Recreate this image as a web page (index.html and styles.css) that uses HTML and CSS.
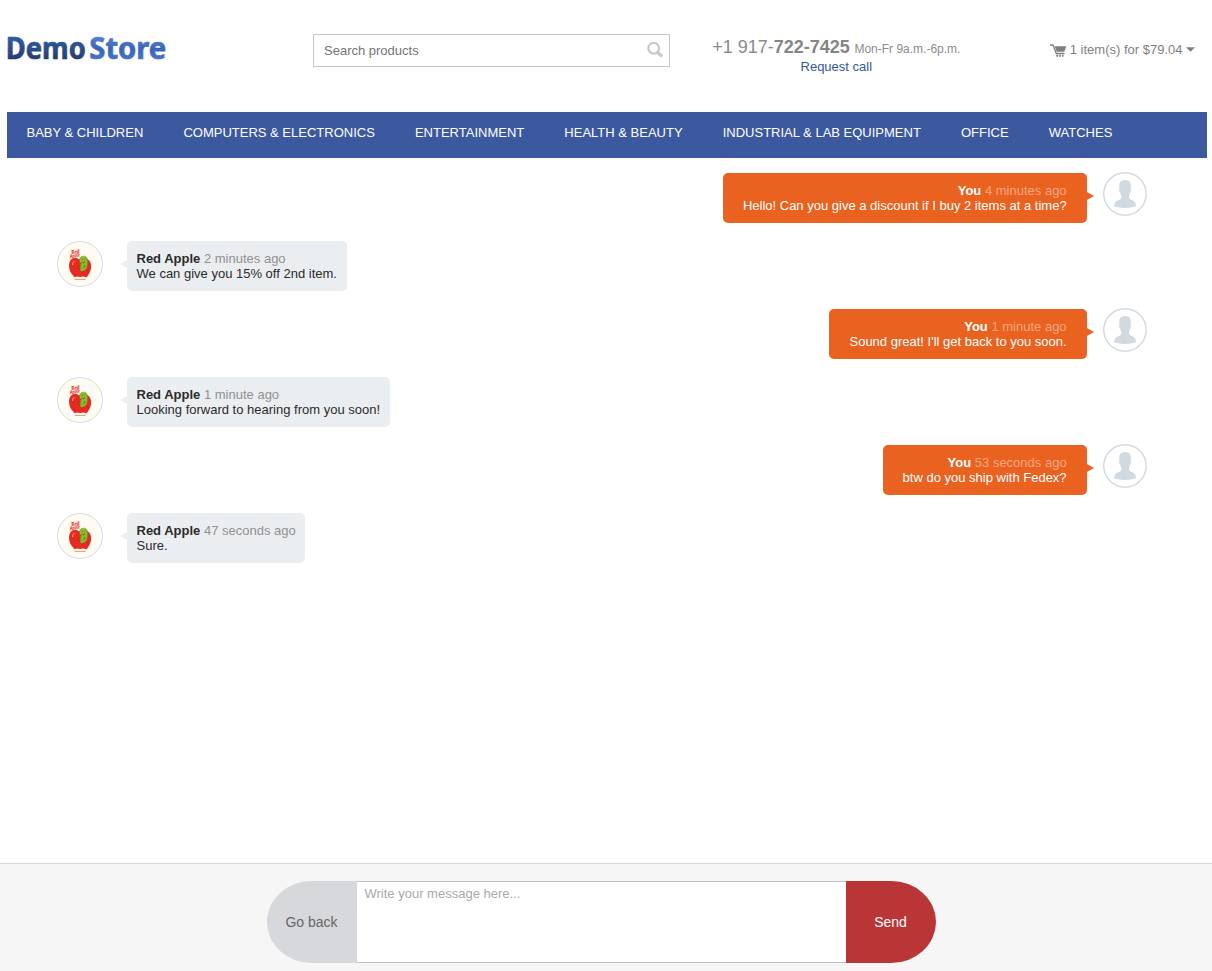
FILE: index.html
```
<!DOCTYPE html>
<html lang="en">
<head>
<meta charset="utf-8">
<title>Demo Store</title>
<link rel="stylesheet" href="styles.css">
</head>
<body>
<svg class="defs" width="0" height="0">
  <defs>
    <symbol id="apple" viewBox="0 0 46 46">
      <circle cx="23" cy="23" r="22.5" fill="#fefbf2" stroke="#d3dbe2"/>
      <g class="apple-label" fill="#e83a35" stroke="#e83a35" stroke-width=".25">
        <text x="14.600" y="13" textLength="8" lengthAdjust="spacingAndGlyphs" transform="rotate(-8 15 13)">Red</text>
        <text x="13.200" y="17.300" textLength="10" lengthAdjust="spacingAndGlyphs" transform="rotate(-12 13 17)">Apple</text>
      </g>
      <path fill="#e52a20" d="M22 18.200c-3-2.200-8.600-1-9.600 3.300-1.200 5 .8 10 3.300 12.500l1.800 2.300 2.500-.8 3 .5 3.500-.5 3.300.8 1.400-2.300c2.600-3.200 3.700-8.300 2.300-12.300-1.500-4.300-7-6-11.500-3.500z"/>
      <path fill="#93b82e" stroke="#5a922b" stroke-width=".6" d="M24 15.900c3.300-1.900 6.600-.2 6.500 4 0 2.600.3 3.700-.5 6-.9 3-3.800 4.800-6.200 3.900-1.500-.7-.9-2.200.5-2-2-.9-1.400-2.700.3-2.500-2-1.400-1.400-2.800.3-2.600-1.900-1.100-2.500-1.400-2.300-3.100.1-1.700.5-3 1.400-3.700z"/>
      <path stroke="#447b25" stroke-width=".9" fill="none" d="M25 18.500l1 .6M27.500 18l.7.6M25.200 21.300q1.800 1 2.800-.4M26.400 27q1.600-1 1.500-3"/>
      <path stroke="#f58d79" stroke-width="1.100" fill="none" d="M15.500 24q0-3 2-3.500"/>
      <path stroke="#ec7767" stroke-width=".8" d="M17.500 38.400h11"/>
    </symbol>
    <symbol id="person" viewBox="0 0 44 44">
      <circle cx="22" cy="22" r="21.200" fill="#fff" stroke="#d2dae1" stroke-width="1.500"/>
      <path fill="#d2dae1" d="M18 8.900c1.600-.8 3-1 4.600-.9 3.600.2 5.500 2.500 5.300 6.200l-.1 2c1 .4.500 3-.5 3.700-.3 1.400-.7 2.800-1.300 3.800v2c.5 2.500 7 2.600 7 7.200v1.400c-3 1.200-7 1.700-11 1.700s-8-.5-10.800-1.700v-1.400c0-4.600 6.700-4.700 7.200-7.200v-2c-.7-1-1.200-2.400-1.500-3.800-1-.7-1.500-3.300-.5-3.700l-.1-2c-.1-2.300.5-4 1.700-5.300z"/>
    </symbol>
  </defs>
</svg>
<div class="page">
  <header class="header">
    <svg class="logo" width="162" height="32" viewBox="0 0 162 32">
      <defs>
        <linearGradient id="dark" gradientUnits="userSpaceOnUse" x1="0" y1="3" x2="0" y2="26"><stop offset="0" stop-color="#2f5fa6"/><stop offset="1" stop-color="#263c73"/></linearGradient>
        <linearGradient id="light" gradientUnits="userSpaceOnUse" x1="0" y1="3" x2="0" y2="26"><stop offset="0" stop-color="#5583d2"/><stop offset=".55" stop-color="#3965b7"/><stop offset="1" stop-color="#4573c8"/></linearGradient>
      </defs>
      <text class="logo-text" x="-1.300" y="25.800" textLength="80" lengthAdjust="spacingAndGlyphs" fill="url(#dark)" stroke="url(#dark)">Demo</text>
      <text class="logo-text" x="82.300" y="25.800" textLength="77" lengthAdjust="spacingAndGlyphs" fill="url(#light)" stroke="url(#light)">Store</text>
    </svg>
    <form class="search">
      <input class="search-input" type="text" placeholder="Search products">
      <svg class="search-icon" width="16" height="16" viewBox="0 0 16 16" fill="none" stroke="#c8c9cb"><circle cx="6.700" cy="6.300" r="5.300" stroke-width="2.200"/><path d="M10.300 10l4.700 4.500" stroke-width="3.200"/></svg>
    </form>
    <div class="phone">
      <div class="phone-line"><span class="number">+1 917-<b>722-7425</b></span> <span class="hours">Mon-Fr 9a.m.-6p.m.</span></div>
      <a class="request">Request call</a>
    </div>
    <div class="cart">
      <svg width="17" height="13" viewBox="0 0 17 13"><path d="M0 1h3l3.300 8.500H14.500" fill="none" stroke="#7f7f7f" stroke-width="1.300"/><path fill="#7f7f7f" d="M4.700 2.300H16.300l-2 5.400H6.700z"/><path fill="#7f7f7f" d="M6.200 10.800h2v1.900h-2zM9.300 10.800h1.700v1.900H9.300zM12 10.800h1.500v1.900H12z"/></svg>
      <span class="cart-text">1 item(s) for $79.04</span>
      <i class="caret"></i>
    </div>
  </header>
  <nav class="nav">
    <a>BABY &amp; CHILDREN</a><a>COMPUTERS &amp; ELECTRONICS</a><a>ENTERTAINMENT</a><a>HEALTH &amp; BEAUTY</a><a>INDUSTRIAL &amp; LAB EQUIPMENT</a><a>OFFICE</a><a>WATCHES</a>
  </nav>
  <main class="chat">
    <div class="message mine">
      <div class="bubble"><div><b>You</b> <span class="time">4 minutes ago</span></div><div>Hello! Can you give a discount if I buy 2 items at a time?</div></div>
      <svg class="avatar"><use href="#person"/></svg>
    </div>
    <div class="message theirs">
      <svg class="avatar"><use href="#apple"/></svg>
      <div class="bubble"><div><b>Red Apple</b> <span class="time">2 minutes ago</span></div><div>We can give you 15% off 2nd item.</div></div>
    </div>
    <div class="message mine">
      <div class="bubble"><div><b>You</b> <span class="time">1 minute ago</span></div><div>Sound great! I'll get back to you soon.</div></div>
      <svg class="avatar"><use href="#person"/></svg>
    </div>
    <div class="message theirs">
      <svg class="avatar"><use href="#apple"/></svg>
      <div class="bubble"><div><b>Red Apple</b> <span class="time">1 minute ago</span></div><div>Looking forward to hearing from you soon!</div></div>
    </div>
    <div class="message mine">
      <div class="bubble"><div><b>You</b> <span class="time">53 seconds ago</span></div><div>btw do you ship with Fedex?</div></div>
      <svg class="avatar"><use href="#person"/></svg>
    </div>
    <div class="message theirs">
      <svg class="avatar"><use href="#apple"/></svg>
      <div class="bubble"><div><b>Red Apple</b> <span class="time">47 seconds ago</span></div><div>Sure.</div></div>
    </div>
  </main>
  <footer class="composer">
    <button class="back">Go back</button>
    <textarea class="text" placeholder="Write your message here..."></textarea>
    <button class="send">Send</button>
  </footer>
</div>
</body>
</html>
```
FILE: styles.css
```
* { box-sizing: border-box; }
body {
  margin: 0;
  background: #fff;
  color: #2b2b2b;
  font: 13px/15px "Liberation Sans", Arial, sans-serif;
  overflow: hidden;
}
.defs { display: block; }
.apple-label { font: italic 5.5px "Liberation Serif", serif; }
.page { display: flex; flex-direction: column; height: 971px; }
.header {
  display: flex;
  align-items: flex-start;
  height: 112px;
  padding: 33px 17px 0 7px;
}
.logo { overflow: visible; }
.logo-text { font: bold 30px "Noto Sans", sans-serif; stroke-width: .7px; }
.search {
  display: flex;
  align-items: flex-start;
  width: 357px;
  height: 33px;
  margin: 1px 0 0 144px;
  padding: 0 6px 0 10px;
  border: 1px solid #c4c6ca;
}
.search-input {
  flex: 1;
  height: 31px;
  padding: 0;
  border: 0;
  outline: 0;
  font: inherit;
}
.search-input::placeholder { color: #757575; }
.search-icon { margin-top: 7px; }
.phone {
  width: 250px;
  margin: 3px 0 0 41.300px;
  text-align: center;
  color: #8b8b8b;
  white-space: nowrap;
}
.phone-line { height: 23px; line-height: 22px; }
.number { font-size: 18px; }
.number b { color: #858585; }
.hours { margin-left: 1px; font-size: 12px; }
.request { color: #3654a0; }
.cart {
  display: flex;
  align-items: center;
  margin: 9px 0 0 auto;
  color: #7f7f7f;
}
.cart svg { margin-top: 2px; }
.cart-text { margin: 0 3.500px 0 3px; }
.caret {
  width: 9px;
  height: 4.500px;
  background: #7f7f7f;
  clip-path: polygon(0 0, 100% 0, 50% 100%);
}
.nav {
  display: flex;
  gap: 40.120px;
  height: 46px;
  margin: 0 5px 0 7px;
  padding: 13px 19.500px;
  background: #3c589e;
  color: #fff;
  white-space: nowrap;
}
.chat {
  flex: 1;
  display: flex;
  flex-direction: column;
  gap: 18px;
  padding: 15px 65px 0 57px;
}
.message { display: flex; height: 50px; }
.bubble { position: relative; border-radius: 5px; }
.bubble::before { content: ""; position: absolute; border: 4px solid transparent; }
.mine { justify-content: flex-end; }
.mine .bubble {
  padding: 10px 20.400px 10px 20px;
  background: #e9621f;
  color: #fff;
  text-align: right;
}
.mine .bubble::before {
  left: 100%;
  top: 18.500px;
  border-left: 7px solid #e9621f;
  border-right: 0;
}
.mine .time { color: #f4a680; }
.mine .avatar { width: 44px; height: 44px; margin: -1px 0 0 16px; }
.theirs .avatar { width: 46px; height: 46px; margin-right: 24px; }
.theirs .bubble { padding: 10px 9.700px 10px 9.500px; background: #ebeef1; }
.theirs .bubble::before {
  right: 100%;
  top: 19px;
  border-right: 7px solid #ebeef1;
  border-left: 0;
}
.theirs .time { color: #919191; }
.composer {
  display: flex;
  height: 108px;
  padding: 17px 0 0 267px;
  border-top: 1px solid #d3dbe2;
  background: #f6f6f6;
}
.back, .send {
  width: 90px;
  height: 82px;
  padding: 0 1px 0 0;
  border: 0;
  font: 14px "Liberation Sans", Arial, sans-serif;
}
.back { border-radius: 50% 0 0 50%; background: #d7d8dc; color: #666; }
.send { border-radius: 0 50% 50% 0; background: #b93536; color: #fff; }
.text {
  width: 489px;
  height: 82px;
  padding: 4px 7.500px;
  border: solid #c1c2c5;
  border-width: 1px 0;
  outline: 0;
  resize: none;
  font: inherit;
}
.text::placeholder { color: #a9a9a9; }
```
